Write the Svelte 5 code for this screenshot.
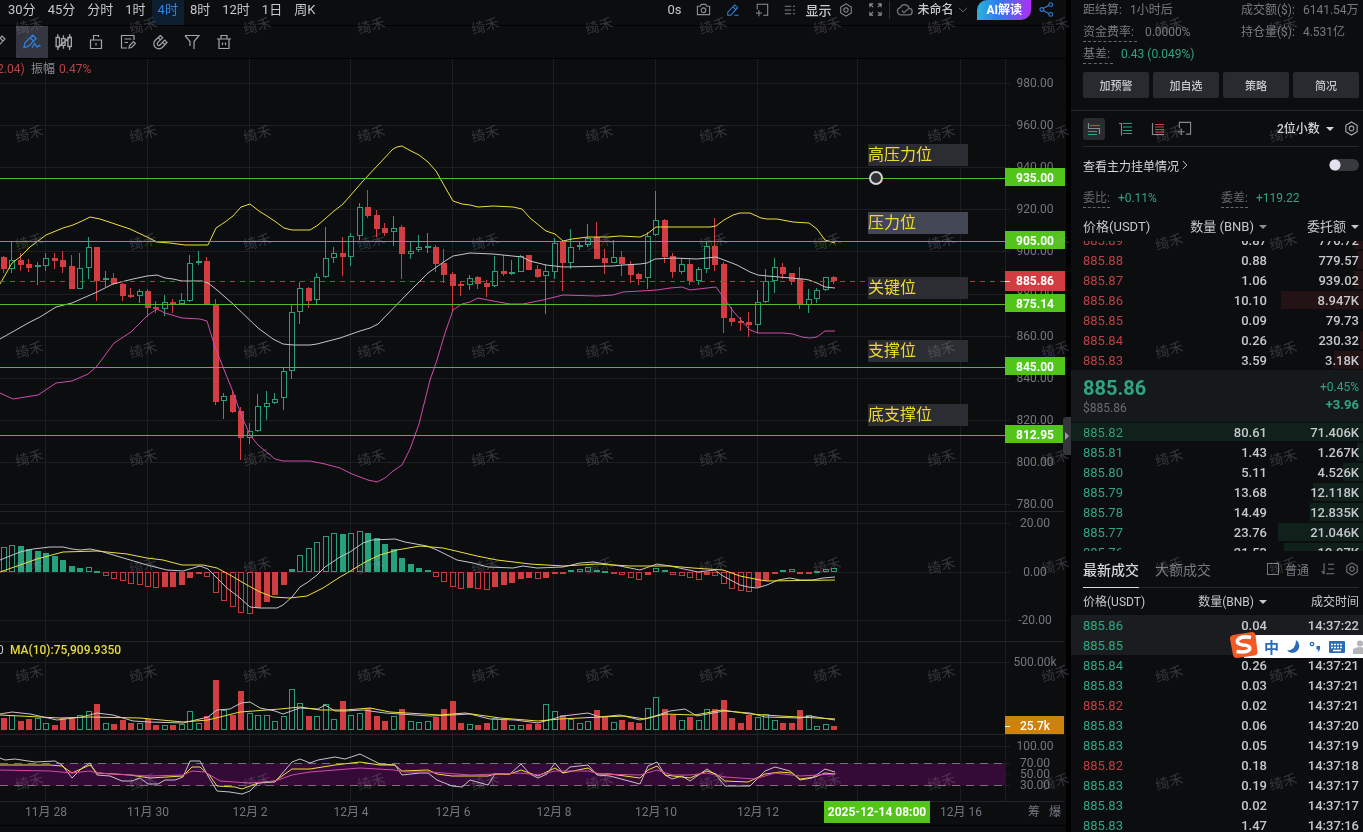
<script lang="ts">
  type Level = { y: number; price: string; label: string; labelY: number; active?: boolean };
  type Row = { price: string; qty: string; total: string; depth: number };

  const periods = ['30分', '45分', '分时', '1时', '4时', '8时', '12时', '1日', '周K'];
  let period = $state('4时');

  const drawTools = [
    { icon: 'pencil', label: '画笔' },
    { icon: 'brush', label: '自由画线' },
    { icon: 'candles', label: 'K线' },
    { icon: 'lock', label: '锁定' },
    { icon: 'note', label: '备注' },
    { icon: 'magnet', label: '磁吸' },
    { icon: 'filter', label: '筛选' },
    { icon: 'trash', label: '删除' }
  ];
  let tool = $state('brush');

  // stroke paths on a 16px grid
  const icons: Record<string, string> = {
    camera: 'M1.500 4.500h3l1.200-2h4.600l1.200 2h3v9h-13zM8 6.300a2.500 2.500 0 1 0 0 5a2.500 2.500 0 0 0 0-5z',
    pencilLine: 'M2 14v-3.500l8-8.300 3.300 3.200-8 8.600zM8 4.300l3.200 3.200M9.500 14h5',
    frameAdd: 'M2.500 7.500V1.500h12V14H9.500M1 11.500h7M4.500 8v7',
    list: 'M1 3h8.500M1 8h8.500M1 13h8.500M12 3h2.500M12 8h2.500M12 13h2.500',
    hex: 'M8 1l6 3.500v7L8 15l-6-3.500v-7zM8 5.500a2.500 2.500 0 1 0 0 5a2.500 2.500 0 0 0 0-5z',
    expand: 'M2 5.500V2h3.500M10.500 2H14v3.500M14 10.500V14h-3.500M5.500 14H2v-3.500M2 2l3.500 3.500M14 2l-3.500 3.500M14 14l-3.500-3.500M2 14l3.500-3.500',
    cloud: 'M4.500 13a3.400 3.400 0 0 1-.5-6.700a4.400 4.400 0 0 1 8.400.7a3 3 0 0 1-.4 6zM5.500 9l2 2 4.500-4',
    chevron: 'M2.500 5l5.500 5.500L13.500 5',
    share: 'M4.500 7l6-3.500M4.500 9l6 3.500M3 6a2 2 0 1 0 0 4a2 2 0 0 0 0-4zM12.500.8a2 2 0 1 0 0 4a2 2 0 0 0 0-4zM12.500 11.200a2 2 0 1 0 0 4a2 2 0 0 0 0-4z',
    pencil: 'M2 13l1-4 7-7 3 3-7 7zM8 4l3 3',
    brush: 'M.8 13l1-4.300L8.500 2l3.200 3-6.700 6.700zM6.500 4.300l3 3M8 13l2.500-3.500 2 3 2-1.500 1 1',
    candles: 'M1 4h3v8H1zM2.500 1v3M2.500 12v3M6 5h3v6H6zM7.500 2v3M7.500 11v3M11.500 4h3v8h-3zM13 1v3M13 12v3M2.500 13L14 3',
    lock: 'M2.500 6h11v8.500h-11zM5.500 6V1.500h5V3M8 9v2.500',
    note: 'M14 6V1.500H1.500v12.500H7M4.500 5h7M4.500 8.500H8M9 14l.5-2.500 4-4 2 2-4 4z',
    magnet: 'M8.500 1.500l-5 4.500a4.800 4.800 0 0 0 6.800 7.500l4.700-5-2.300-2.300-4.700 4.800a1.600 1.600 0 0 1-2.300-2.300l5-4.900zM6.300 3.500l2.200 2.300M10.600 8.300l2.200 2.300',
    filter: 'M1 1.500h14l-5 6v7.500M1 1.500l5 6v4.500',
    trash: 'M1 5h14M3 5v9.500h10V5M5 5V1.500h6V5M6.500 8.500v2.500M9.500 8.500v2.500',
    sort: 'M3.500 1.500v12M3.500 13.500L1 10.500M8 2.500h7M8 8h7M6 13.500h9'
  };

  const step = 8.47;
  const x = (i: number) => Math.round(4 + i * step);

  // up, high, body top, body bottom, low
  const candles = [
    [0, 256, 257, 269, 273], [1, 241, 260, 269, 273], [0, 253, 260, 265, 271], [0, 259, 264, 268, 272], [1, 262, 265, 267, 285],
    [1, 253, 258, 266, 271], [0, 253, 258, 261, 269], [0, 251, 260, 267, 273], [0, 255, 266, 289, 289], [1, 253, 268, 289, 289],
    [1, 237, 247, 268, 279], [0, 247, 247, 281, 301], [1, 271, 278, 280, 287], [0, 273, 278, 284, 285], [0, 283, 284, 296, 301],
    [0, 288, 295, 297, 298], [1, 289, 291, 296, 303], [0, 289, 291, 308, 317], [0, 301, 307, 309, 313], [1, 295, 302, 309, 316],
    [0, 299, 302, 304, 313], [1, 293, 300, 304, 304], [1, 255, 263, 301, 302], [1, 251, 261, 263, 265], [0, 257, 261, 304, 305],
    [0, 299, 304, 402, 405], [1, 393, 396, 401, 419], [0, 391, 395, 412, 413], [0, 407, 411, 438, 460], [1, 423, 431, 438, 444],
    [1, 394, 406, 431, 432], [1, 391, 403, 407, 420], [1, 393, 399, 403, 404], [1, 367, 371, 398, 410], [1, 305, 312, 371, 379],
    [1, 282, 288, 312, 324], [0, 287, 288, 301, 308], [1, 273, 277, 300, 305], [1, 227, 258, 277, 278], [1, 247, 253, 258, 263],
    [0, 237, 253, 257, 276], [1, 233, 236, 257, 266], [1, 203, 207, 236, 240], [0, 190, 207, 216, 218], [0, 210, 215, 229, 237],
    [0, 223, 228, 233, 236], [1, 216, 228, 232, 246], [0, 225, 227, 254, 279], [1, 241, 251, 254, 259], [1, 235, 247, 250, 252],
    [1, 233, 246, 248, 253], [0, 245, 247, 264, 272], [0, 249, 263, 275, 283], [0, 272, 274, 286, 312], [0, 282, 284, 286, 296],
    [1, 275, 278, 285, 290], [0, 276, 277, 284, 289], [0, 280, 283, 287, 297], [1, 256, 271, 286, 287], [0, 255, 271, 274, 276],
    [1, 260, 272, 274, 275], [1, 255, 256, 272, 272], [0, 255, 255, 270, 270], [0, 265, 269, 277, 278], [1, 264, 271, 276, 314],
    [1, 238, 243, 272, 279], [0, 240, 242, 263, 291], [1, 229, 247, 263, 269], [1, 241, 245, 247, 250], [1, 224, 238, 245, 247],
    [0, 222, 237, 259, 259], [0, 249, 258, 263, 274], [1, 240, 257, 263, 263], [0, 251, 257, 264, 276], [0, 261, 264, 275, 283],
    [0, 273, 274, 279, 285], [1, 232, 236, 278, 289], [1, 191, 220, 235, 236], [0, 219, 220, 257, 263], [0, 253, 256, 272, 278],
    [1, 259, 264, 272, 274], [0, 259, 264, 281, 285], [1, 267, 269, 281, 285], [1, 241, 246, 269, 273], [0, 218, 246, 265, 271],
    [0, 262, 264, 318, 333], [0, 307, 318, 322, 326], [0, 317, 321, 323, 331], [0, 312, 322, 325, 337], [1, 290, 302, 325, 333],
    [1, 269, 281, 302, 303], [1, 258, 267, 281, 293], [0, 263, 267, 274, 279], [0, 273, 273, 281, 285], [0, 267, 279, 305, 309],
    [1, 289, 299, 305, 313], [1, 288, 290, 299, 303], [1, 277, 277, 290, 291], [0, 276, 277, 281, 284]
  ];

  const volumes = [
    12, 15, 9, 11, 12, 7, 5, 12, 12, 15, 19, 26, 7, 6, 10, 7, 7, 11, 5, 5, 5, 6, 19, 7, 14, 50, 20, 15, 39, 17, 15, 15, 9,
    14, 41, 27, 14, 14, 26, 11, 29, 15, 17, 22, 14, 9, 14, 21, 9, 8, 9, 13, 21, 29, 7, 6, 5, 7, 12, 10, 5, 5, 6, 6, 26, 19,
    15, 11, 7, 9, 20, 13, 8, 10, 8, 7, 22, 33, 21, 15, 10, 13, 10, 21, 21, 30, 12, 7, 15, 13, 16, 10, 7, 7, 20, 15, 4, 6, 4
  ];

  const macd = [
    25, 27, 26, 23, 21, 19, 16, 12, 6, 4, 5, 1, -4, -7, -9, -12, -13, -15, -16, -15, -15, -13, -6, -1, -5, -21, -29, -35,
    -41, -42, -36, -30, -23, -13, 3, 17, 24, 30, 36, 39, 38, 39, 41, 39, 34, 28, 23, 14, 8, 4, 2, -5, -10, -15, -17, -16,
    -17, -18, -15, -13, -11, -7, -6, -7, -6, -2, -2, 2, 3, 5, 2, 1, -2, -3, -6, -8, -3, 4, 2, -3, -4, -6, -8, -3, -4, -12,
    -17, -19, -20, -15, -9, -2, 2, 3, -1, -1, 1, 3, 4
  ];

  // hollow while the momentum is growing, solid while it fades
  const isHollow = (i: number) => i === 0 || Math.abs(macd[i]) > Math.abs(macd[i - 1]);

  const lines = [
    { tone: 'yellow', d: '0,284 12,263 20,257 30,247 46,235 63,228 73,225 82,221 90,217 100,219 115,224 130,229 147,237 157,242 170,243 185,245 208,245 216,228 225,222 233,216 241,207 250,204 259,211 267,216 276,222 284,228 292,230 310,230 318,225 326,218 334,211 343,204 363,181 393,149 397,147 402,146 411,151 419,155 428,162 436,171 445,187 453,201 462,204 470,205 478,207 493,206 513,207 522,209 530,218 546,231 555,234 563,241 572,239 588,237 607,237 620,236 640,237 647,234 656,227 710,227 716,226 724,220 733,215 740,213 750,213 761,218 767,219 777,219 793,222 809,223 817,229 825,240 835,243' },
    { tone: 'white', d: '0,339 30,322 40,317 56,307 72,303 97,292 113,284 133,279 147,276 157,275 165,278 173,279 182,281 202,281 208,283 217,290 233,304 258,328 273,339 283,344 293,345 310,345 317,344 340,338 360,331 370,328 378,324 411,290 428,273 445,261 453,256 470,253 493,254 522,257 530,261 546,265 563,267 613,266 623,265 640,264 647,263 655,259 673,258 697,259 716,257 724,260 737,265 750,272 758,275 767,276 803,279 809,280 817,283 825,287 835,288' },
    { tone: 'pink', d: '0,393 13,399 38,395 56,383 72,381 88,374 97,366 114,343 131,332 148,315 157,309 165,313 182,318 200,319 207,321 215,347 233,392 242,417 250,435 258,445 275,459 283,461 310,461 325,464 340,468 352,474 368,480 377,482 385,478 393,471 402,465 410,449 419,424 430,380 437,360 445,333 453,310 462,304 470,302 478,298 493,301 510,304 523,304 543,300 555,297 563,295 597,296 613,295 623,292 640,291 657,290 670,288 682,287 690,290 707,288 716,287 724,298 733,311 741,320 750,330 758,333 783,333 793,334 802,337 810,338 817,337 825,331 835,331' },
    { tone: 'white', d: '0,560 20,552 33,549 50,547 63,547 72,549 80,550 90,549 100,551 120,557 147,565 167,570 183,571 200,566 208,569 217,578 227,588 240,598 250,607 260,608 277,608 283,605 292,597 300,587 308,582 317,575 325,567 340,557 350,552 363,543 372,540 395,539 405,542 427,546 437,550 457,560 473,563 488,567 513,568 523,566 537,568 563,567 580,563 593,562 620,566 640,570 657,564 670,566 698,572 715,570 723,576 740,585 748,587 757,588 767,585 778,580 790,578 800,580 813,580 823,578 835,577' },
    { tone: 'yellow', d: '0,572 20,565 37,559 63,552 97,551 127,554 147,558 163,560 182,565 203,565 217,568 230,575 247,585 260,592 273,597 290,598 307,596 323,588 340,577 347,573 367,561 380,555 397,550 420,546 443,548 477,556 497,560 530,564 563,566 597,564 630,566 670,566 693,568 723,570 740,576 760,580 767,581 835,580' },
    { tone: 'white', d: '0,714 12,712 30,714 57,720 82,717 97,713 113,715 133,721 150,722 183,723 208,717 217,710 230,709 241,703 250,702 260,708 275,711 283,714 300,708 318,709 325,705 335,711 345,711 363,710 385,713 430,716 452,715 470,714 490,719 515,720 538,723 563,716 588,713 600,717 620,715 640,720 655,716 670,711 685,709 697,716 724,711 750,713 765,717 800,718 810,716 835,720' },
    { tone: 'yellow', d: '0,715 60,718 90,717 140,718 183,722 208,720 240,712 280,709 300,707 320,710 345,710 370,708 390,712 440,715 465,713 500,718 538,721 560,719 600,717 625,716 645,719 665,714 695,715 722,710 750,714 780,716 835,719' },
    { tone: 'white', d: '0,758 5,760 15,759 35,762 55,761 62,765 72,778 82,768 90,763 97,775 110,776 122,781 132,781 140,778 148,784 158,784 165,780 175,780 183,777 190,761 200,761 208,776 217,791 230,792 242,794 250,791 258,783 275,782 292,762 300,759 310,763 318,760 335,757 345,759 360,754 380,764 395,765 402,775 420,773 428,773 437,780 452,786 462,787 470,780 488,785 495,774 510,774 521,764 530,774 538,778 547,774 555,763 563,773 570,767 588,765 597,775 610,776 640,784 648,766 657,762 665,775 672,779 682,776 690,781 707,769 716,775 725,786 750,786 765,771 775,767 790,771 800,780 812,778 825,769 835,772' },
    { tone: 'yellow', d: '0,765 50,765 62,766 72,773 90,765 97,773 130,775 150,778 183,776 192,767 200,767 210,776 217,786 235,787 242,789 258,783 275,781 292,769 310,769 335,765 360,762 380,765 395,765 402,771 428,770 437,774 452,776 488,776 495,774 510,774 521,770 538,776 555,768 563,773 588,768 597,774 610,774 640,778 648,770 657,766 665,775 690,778 707,771 716,774 725,781 748,782 765,774 780,772 792,773 800,779 815,777 825,773 835,774' },
    { tone: 'pink', d: '0,770 50,771 72,773 90,771 97,773 150,776 183,775 192,771 205,772 220,781 250,783 275,781 292,775 310,772 335,770 360,768 395,770 405,772 430,772 470,775 521,773 538,775 555,771 588,771 600,774 640,775 657,770 672,775 690,775 707,773 725,777 755,779 775,773 800,776 835,774' }
  ];

  const axis = [
    { y: 83, text: '980.00' }, { y: 125, text: '960.00' }, { y: 167, text: '940.00' }, { y: 209, text: '920.00' },
    { y: 251, text: '900.00' }, { y: 294, text: '880.00' }, { y: 336, text: '860.00' }, { y: 378, text: '840.00' },
    { y: 420, text: '820.00' }, { y: 462, text: '800.00' }, { y: 504, text: '780.00' }, { y: 523, text: '20.00' },
    { y: 572, text: '0.00' }, { y: 620, text: '-20.00' }, { y: 662, text: '500.00k' }, { y: 746, text: '100.00' },
    { y: 763, text: '70.00' }, { y: 774, text: '50.00' }, { y: 785, text: '30.00' }
  ];

  const dates = [
    { x: 46, text: '11月 28' }, { x: 148, text: '11月 30' }, { x: 250, text: '12月 2' }, { x: 351, text: '12月 4' },
    { x: 453, text: '12月 6' }, { x: 554, text: '12月 8' }, { x: 656, text: '12月 10' }, { x: 758, text: '12月 12' },
    { x: 858, text: '' }, { x: 961, text: '12月 16' }
  ];

  const levels: Level[] = [
    { y: 178, price: '935.00', label: '高压力位', labelY: 144 },
    { y: 241, price: '905.00', label: '压力位', labelY: 212, active: true },
    { y: 304, price: '875.14', label: '关键位', labelY: 277 },
    { y: 367, price: '845.00', label: '支撑位', labelY: 340 },
    { y: 435, price: '812.95', label: '底支撑位', labelY: 404 }
  ];

  // depth is the bar width in percent of the panel
  const asks: Row[] = [
    { price: '885.89', qty: '0.87', total: '770.72', depth: 3 },
    { price: '885.88', qty: '0.88', total: '779.57', depth: 2 },
    { price: '885.87', qty: '1.06', total: '939.02', depth: 3 },
    { price: '885.86', qty: '10.10', total: '8.947K', depth: 28 },
    { price: '885.85', qty: '0.09', total: '79.73', depth: 0 },
    { price: '885.84', qty: '0.26', total: '230.32', depth: 1 },
    { price: '885.83', qty: '3.59', total: '3.18K', depth: 10 }
  ];
  const bids: Row[] = [
    { price: '885.82', qty: '80.61', total: '71.406K', depth: 100 },
    { price: '885.81', qty: '1.43', total: '1.267K', depth: 2 },
    { price: '885.80', qty: '5.11', total: '4.526K', depth: 7 },
    { price: '885.79', qty: '13.68', total: '12.118K', depth: 17 },
    { price: '885.78', qty: '14.49', total: '12.835K', depth: 18 },
    { price: '885.77', qty: '23.76', total: '21.046K', depth: 29 },
    { price: '885.76', qty: '21.53', total: '19.07K', depth: 27 }
  ];

  const trades = [
    { price: '885.86', qty: '0.04', time: '14:37:22', up: true, fresh: true },
    { price: '885.85', qty: '', time: '', up: true, fresh: true },
    { price: '885.84', qty: '0.26', time: '14:37:21', up: true },
    { price: '885.83', qty: '0.03', time: '14:37:21', up: true },
    { price: '885.82', qty: '0.02', time: '14:37:21', up: false },
    { price: '885.83', qty: '0.06', time: '14:37:20', up: true },
    { price: '885.83', qty: '0.05', time: '14:37:19', up: true },
    { price: '885.82', qty: '0.18', time: '14:37:18', up: false },
    { price: '885.83', qty: '0.19', time: '14:37:17', up: true },
    { price: '885.83', qty: '0.02', time: '14:37:17', up: true },
    { price: '885.83', qty: '1.47', time: '14:37:16', up: true }
  ];

  let showMain = $state(false);
  let plain = $state(false);
</script>

{#snippet icon(name: string, size = 14)}
  <svg class="icon" width={size} height={size} viewBox="0 0 16 16"><path d={icons[name]} /></svg>
{/snippet}

{#snippet depthRows(rows: Row[], side: string)}
  <tbody class="depth {side}">
    {#each rows as row}
      <tr>
        <td class="price">
          <span class="bar" style="width: {row.depth}%"></span>
          {row.price}
        </td>
        <td>{row.qty}</td>
        <td>{row.total}</td>
      </tr>
    {/each}
  </tbody>
{/snippet}

<div class="app">
  <main>
    <nav class="topbar">
      <div class="periods">
        {#each periods as p}
          <button class:active={p === period} onclick={() => (period = p)}>{p}</button>
        {/each}
      </div>
      <div class="tools">
        <span>0s</span>
        <button aria-label="截图">{@render icon('camera', 15)}</button>
        <button class="blue" aria-label="画线">{@render icon('pencilLine')}</button>
        <button aria-label="新增">{@render icon('frameAdd')}</button>
        <button aria-label="列表">{@render icon('list', 12)}</button>
      </div>
      <div class="display">
        <button class="strong">显示</button>
        <button aria-label="设置">{@render icon('hex')}</button>
      </div>
      <button class="full" aria-label="全屏">{@render icon('expand', 15)}</button>
      <button class="layout">{@render icon('cloud', 17)}未命名{@render icon('chevron', 12)}</button>
      <button class="ai">AI解读</button>
      <button class="blue share" aria-label="分享">{@render icon('share', 15)}</button>
    </nav>

    <div class="drawbar">
      {#each drawTools as t}
        <button class:active={t.icon === tool} aria-label={t.label} onclick={() => (tool = t.icon)}>
          {@render icon(t.icon, t.icon === 'brush' || t.icon === 'candles' ? 18 : 16)}
        </button>
      {/each}
    </div>

    <svg class="chart" viewBox="0 59 1066 766">
      <g class="grid">
        {#each axis as a}
          <line x1="0" x2="1010" y1={a.y + 0.5} y2={a.y + 0.5} />
        {/each}
        {#each dates as d}
          <line x1={d.x - 0.5} x2={d.x - 0.5} y1="59" y2="801" />
        {/each}
        <line x1="1005.5" x2="1005.5" y1="59" y2="801" />
        {#each [511, 641, 734, 801] as y}
          <line class="split" x1="0" x2="1064" y1={y + 0.5} y2={y + 0.5} />
        {/each}
      </g>

      <rect class="band" x="0" y="764" width="1005" height="22" />
      <line class="band-edge" x1="0" x2="1005" y1="763.5" y2="763.5" />
      <line class="band-edge" x1="0" x2="1005" y1="785.5" y2="785.5" />

      {#each candles as [up, high, top, bottom, low], i}
        <g class={up ? 'up' : 'down'}>
          <line x1={x(i) - 0.5} x2={x(i) - 0.5} y1={high} y2={top} />
          <line x1={x(i) - 0.5} x2={x(i) - 0.5} y1={bottom} y2={low} />
          <rect x={x(i) - 2.5} y={top + 0.5} width="5" height={Math.max(bottom - top - 1, 1)} />
        </g>
        <rect
          class={up ? 'hollow-up' : 'solid-down'}
          x={x(i) - 2.5}
          y={730.5 - volumes[i]}
          width="5"
          height={volumes[i] - 1}
        />
        <rect
          class="{isHollow(i) ? 'hollow' : 'solid'}-{macd[i] > 0 ? 'up' : 'down'}"
          x={x(i) - 2.5}
          y={macd[i] > 0 ? 572.5 - macd[i] : 572.5}
          width="5"
          height={Math.max(Math.abs(macd[i]) - 1, 1)}
        />
      {/each}

      {#each lines as l}
        <polyline class={l.tone} points={l.d} />
      {/each}

      <g class="axis">
        {#each axis as a}
          <text x="1035" y={a.y + 4}>{a.text}</text>
        {/each}
        {#each dates as d}
          <text x={d.x} y="816">{d.text}</text>
        {/each}
        <text x="1034" y="816">筹</text>
        <text x="1055" y="816">爆</text>
      </g>

      <line class="last" x1="0" x2="1005" y1="281.5" y2="281.5" />
      {#each levels as l}
        <rect class="note" class:active={l.active} x="868" y={l.labelY} width="100" height="22" />
        <text class="note-text" x="868" y={l.labelY + 16}>{l.label}</text>
        <line class="level" x1="0" x2="1005" y1={l.y + 0.5} y2={l.y + 0.5} />
        <rect class="tag" x="1005" y={l.y - 10} width="60" height="18" />
        <text class="tag-text" x="1035" y={l.y + 4}>{l.price}</text>
      {/each}
      <circle class="anchor" cx="876" cy="178" r="6" />
      <rect class="tag last-tag" x="1005" y="271" width="60" height="20" />
      <line class="tick" x1="1005" x2="1010" y1="281.5" y2="281.5" />
      <text class="tag-text" x="1035" y="285">885.86</text>
      <rect class="tag volume-tag" x="1005" y="716" width="59" height="18" />
      <line class="tick" x1="1005" x2="1010" y1="726.5" y2="726.5" />
      <text class="tag-text medium" x="1035" y="730">25.7k</text>
      <rect class="tag" x="824" y="801" width="106" height="22" />
      <text class="tag-text" x="877" y="816">2025-12-14 08:00</text>

      <text class="legend red" x="-3" y="73">2.04)</text>
      <text class="legend" x="31" y="73">振幅</text>
      <text class="legend red" x="59" y="73">0.47%</text>
      <text class="legend light" x="-3" y="654">0</text>
      <text class="legend ma" x="10" y="654">MA(10):75,909.9350</text>
    </svg>
    <button class="collapse" aria-label="收起"></button>
  </main>

  <aside>
    <section class="stats">
      <div><span>距结算:</span> <b>1小时后</b></div>
      <div><span>成交额($):</span> <b>6141.54万</b></div>
      <div><span class="hint">资金费率:</span> <b>0.0000%</b></div>
      <div><span>持仓量($):</span> <b>4.531亿</b></div>
      <div><span class="hint">基差:</span> <b class="green">0.43 (0.049%)</b></div>
    </section>
    <div class="actions">
      <button>加预警</button>
      <button>加自选</button>
      <button>策略</button>
      <button>简况</button>
    </div>

    <div class="bookbar">
      <button class="active" aria-label="买卖盘">
        <svg class="icon" width="14" height="14" viewBox="0 0 14 14">
          <path d="M1.500 1v5.500H12.500V12" /><path class="r" d="M3 3.500h10" /><path class="g" d="M1 9.500h9M1 12.500h9" />
        </svg>
      </button>
      <button aria-label="买盘">
        <svg class="icon" width="14" height="14" viewBox="0 0 14 14">
          <path d="M0 1.500h2.500v12" /><path class="g" d="M4 1.500h9M4 5h9M4 8.500h9M4 11.500h9" />
        </svg>
      </button>
      <button aria-label="卖盘">
        <svg class="icon" width="14" height="14" viewBox="0 0 14 14">
          <path d="M1.500 1v11.500H13" /><path class="r" d="M4 2.500h9M4 5h9M4 7.500h9M4 10h9" />
        </svg>
      </button>
      <button class="add" aria-label="添加">{@render icon('frameAdd', 15)}</button>
      <span class="select">
        <select aria-label="小数位"><option>2位小数</option><option>1位小数</option></select>
        <i class="caret"></i>
      </span>
      <button class="gear" aria-label="盘口设置">{@render icon('hex', 15)}</button>
    </div>

    <div class="main-orders">
      <a href="#orders">查看主力挂单情况{@render icon('chevron', 12)}</a>
      <input type="checkbox" class="switch" aria-label="主力挂单" bind:checked={showMain} />
    </div>

    <div class="ratio">
      <div><span class="hint">委比:</span> <b>+0.11%</b></div>
      <div><span class="hint">委差:</span> <b>+119.22</b></div>
    </div>

    <table class="book">
      <thead>
        <tr>
          <th>价格(USDT)</th>
          <th>数量 (BNB)<i class="caret dim"></i></th>
          <th>委托额<i class="caret"></i></th>
        </tr>
      </thead>
      {@render depthRows(asks, 'asks')}
      <tbody>
        <tr class="mid">
          <td><strong>885.86</strong><small>$885.86</small></td>
          <td></td>
          <td>+0.45%<b>+3.96</b></td>
        </tr>
      </tbody>
      {@render depthRows(bids, 'bids')}
    </table>

    <div class="tabs">
      <button class="active">最新成交</button>
      <button>大额成交</button>
      <label><input type="checkbox" bind:checked={plain} />普通</label>
      <button class="sort" aria-label="排序">{@render icon('sort')}</button>
      <button aria-label="成交设置">{@render icon('hex')}</button>
    </div>

    <table class="trades">
      <thead>
        <tr>
          <th>价格(USDT)</th>
          <th>数量(BNB)<i class="caret"></i></th>
          <th>成交时间</th>
        </tr>
      </thead>
      <tbody>
        {#each trades as t}
          <tr class:fresh={t.fresh}>
            <td class={t.up ? 'green' : 'red'}>{t.price}</td>
            <td>{t.qty}</td>
            <td>{t.time}</td>
          </tr>
        {/each}
      </tbody>
    </table>
  </aside>

  <div class="watermark" aria-hidden="true">
    {#each { length: 96 } as _}
      <span>绮禾</span>
    {/each}
  </div>

  <div class="ime">
    <svg class="logo" width="30" height="28" viewBox="0 0 30 28">
      <path d="M4 4L23 1q3 0 3.500 3l2 17q0 3-3 3.500L8 27q-3 .500-4-3L1 8q-.500-3 3-4z" fill="#f15a24" />
      <path d="M22 6.500Q13 4.500 9 8.500q-2.500 4.500 5 5.500 8 .500 6.500 4.500Q18 22 7.500 20.500" fill="none" stroke="#fff" stroke-width="3.600" />
    </svg>
    <span>中</span>
    <svg width="14" height="14" viewBox="0 0 14 14"><path d="M9 0a7 7 0 1 1-9 10.500Q9 10 9 0z" fill="#2b6cb8" /></svg>
    <svg width="12" height="12" viewBox="0 0 12 12">
      <circle cx="3" cy="3" r="1.700" fill="none" stroke="#2b6cb8" stroke-width="1.300" />
      <path d="M7.500 5h3.500v2.500q0 2.500-3 3.500 1.300-1 1.300-2.500H7.500z" fill="#2b6cb8" />
    </svg>
    <svg width="16" height="12" viewBox="0 0 16 12">
      <rect width="16" height="12" rx="1" fill="#2b6cb8" />
      <path d="M2 3.500h12M2 6.500h12" stroke="#fff" stroke-width="1.500" stroke-dasharray="2 1" /><path d="M4 9.500h8" stroke="#fff" stroke-width="1.500" />
    </svg>
    <svg width="14" height="14" viewBox="0 0 14 14">
      <circle cx="7" cy="3.500" r="3" fill="#b4b4b8" /><path d="M0 9q7-4 14 0v5H0z" fill="#b4b4b8" />
    </svg>
  </div>
</div>

<style>
  :global(body) {
    margin: 0;
    background: #000;
  }

  .app {
    position: relative;
    display: grid;
    grid-template-columns: minmax(0, 1fr) 292px;
    gap: 5px;
    height: 100vh;
    overflow: hidden;
    color: #c6c8cd;
    font-family: Roboto, "Noto Sans CJK SC", sans-serif;
    font-size: 12px;
  }

  main,
  aside {
    position: relative;
    min-width: 0;
    background: #0c0d0f;
  }

  button,
  select {
    padding: 0;
    border: 0;
    background: none;
    color: inherit;
    font: inherit;
    white-space: nowrap;
    cursor: pointer;
  }

  .icon {
    display: block;
    flex: none;
    fill: none;
    stroke: currentColor;
    stroke-width: 1.2;
  }
  .icon .r { stroke: #cf3f42; }
  .icon .g { stroke: #2fa37a; }

  .green { color: #2ea57f; }
  .red { color: #bd4144; }
  .blue { color: #2f80dd; }

  /* top bar */
  .topbar {
    display: flex;
    align-items: center;
    height: 19px;
    padding: 0 12px 6px 2px;
    border-bottom: 1px solid #000;
    font-size: 13px;
  }
  .periods {
    display: flex;
    margin-right: auto;
  }
  .periods button {
    height: 19px;
    padding: 0 6px;
    line-height: 19px;
  }
  .periods .active {
    background: #0e1e31;
    box-shadow: 0 6px #0e1e31;
    color: #2f86e6;
  }
  .tools {
    display: flex;
    align-items: center;
    gap: 15px;
    margin-right: 9px;
    color: #8b8e94;
  }
  .tools span { color: #c6c8cd; }
  .tools .blue { color: #2f80dd; }
  .display {
    display: flex;
    align-items: center;
    gap: 8px;
    margin-right: 15px;
  }
  .display button:last-child,
  .full {
    color: #8b8e94;
  }
  .strong { font-weight: 500; }
  .layout {
    display: flex;
    align-items: center;
    gap: 4px;
    margin-left: 6px;
    padding-left: 6px;
    border-left: 1px solid #2b2d31;
    font-size: 12px;
    font-weight: 500;
    line-height: 18px;
  }
  .layout .icon { color: #6f7278; }
  .ai {
    align-self: flex-start;
    height: 20px;
    margin: 0 8px;
    padding: 0 9px;
    border-radius: 10px 0 10px 0;
    background: linear-gradient(90deg, #2bb3d8, #2f7bf0 40%, #b02df5);
    color: #fff;
    font-size: 12px;
    font-weight: 700;
    line-height: 20px;
  }

  .drawbar {
    display: flex;
    height: 32px;
    margin-left: -16px;
    border-bottom: 1px solid #000;
    color: #a3a5aa;
  }
  .drawbar button {
    display: grid;
    place-items: center;
    width: 32px;
  }
  .drawbar .active {
    background: #343741;
    color: #2f80dd;
  }

  /* chart */
  .chart {
    display: block;
    width: 100%;
    border-bottom: 1px solid #000;
    font-family: Roboto, "Noto Sans CJK SC", sans-serif;
    font-size: 12px;
  }
  .grid line { stroke: #1c1e21; }
  .grid .split { stroke: #222428; }
  .axis text {
    fill: #73777f;
    text-anchor: middle;
  }
  .up line,
  .up rect,
  .hollow-up {
    fill: #0c0d0f;
    stroke: #2a9d78;
  }
  .up rect, .hollow-up, .hollow-down { fill-opacity: 0.5; }
  .hollow-down {
    fill: #0c0d0f;
    stroke: #c23c3f;
  }
  .down line,
  .down rect,
  .solid-down {
    fill: #d13d40;
    stroke: #d13d40;
  }
  .solid-up {
    fill: #27a17c;
    stroke: #27a17c;
  }
  polyline { fill: none; }
  .yellow { stroke: #ece03c; }
  .white { stroke: #c4c4cc; }
  .pink { stroke: #d14bab; }
  .band { fill: #340a36; }
  .band-edge {
    stroke: #77707a;
    stroke-dasharray: 8 6;
  }
  .last {
    stroke: #b53a3d;
    stroke-dasharray: 5 5;
  }
  .level { stroke: #55b82c; }
  .note { fill: #2c2d32; }
  .note.active { fill: #434653; }
  .note-text {
    fill: #f0da2e;
    font-size: 16px;
  }
  .tag { fill: #52c41a; }
  .last-tag { fill: #d13d40; }
  .volume-tag { fill: #cc820e; }
  .tag-text {
    fill: #fff;
    font-weight: 700;
    text-anchor: middle;
  }
  .tag-text.medium { font-weight: 500; }
  .tick { stroke: #fff; }
  .anchor {
    fill: #303136;
    stroke: #d4d4d8;
    stroke-width: 2;
  }
  .legend { fill: #8a8d93; }
  .legend.red { fill: #bd4144; }
  .legend.light { fill: #c6c8cd; }
  .legend.ma {
    fill: #e6da3c;
    font-weight: 500;
  }
  .collapse {
    position: absolute;
    top: 417px;
    right: -5px;
    z-index: 1;
    width: 8px;
    height: 38px;
    border-radius: 3px 0 0 3px;
    background: #34363c;
  }
  .collapse::after {
    content: "";
    display: block;
    margin-left: 2px;
    width: 0;
    border: 4px solid transparent;
    border-left-color: #9a9ca2;
    border-right: 0;
  }

  /* right panel */
  .stats {
    display: grid;
    grid-template-columns: 158px auto;
    gap: 4px 0;
    padding: 1px 0 0 12px;
    color: #777a82;
    line-height: 18px;
    white-space: nowrap;
  }
  .stats b {
    margin-left: 5px;
    font-weight: 400;
  }
  .hint {
    padding-bottom: 2px;
    border-bottom: 1px dashed #66696f;
  }
  .stats .hint { padding-right: 3px; }
  .actions {
    display: grid;
    grid-template-columns: repeat(4, 1fr);
    gap: 4px;
    padding: 9px 4px 12px 12px;
    border-bottom: 1px solid #26282c;
  }
  .actions button {
    height: 26px;
    border-radius: 2px;
    background: #292a2f;
    font-size: 11px;
    font-weight: 500;
  }
  .bookbar {
    display: flex;
    align-items: center;
    gap: 10px;
    height: 35px;
    margin: 0 4px 0 12px;
    border-bottom: 1px solid #26282c;
    color: #85888e;
  }
  .bookbar button {
    display: grid;
    place-items: center;
    width: 22px;
    height: 22px;
    border-radius: 3px;
  }
  .bookbar .active { background: #2a2b30; }
  .bookbar .add {
    width: 15px;
    margin-left: -2px;
  }
  .bookbar .gear {
    width: 15px;
    color: #a9abb0;
  }
  .select {
    display: flex;
    align-items: center;
    margin-left: auto;
    color: #d6d7da;
    font-weight: 500;
  }
  select { appearance: none; }
  .caret {
    display: inline-block;
    margin-left: 6px;
    border: 4px solid transparent;
    border-top-color: currentColor;
    border-bottom: 0;
    vertical-align: 2px;
  }
  .caret.dim { color: #8b8e94; }
  th .caret { margin-left: 5px; }
  .main-orders {
    display: flex;
    align-items: center;
    justify-content: space-between;
    height: 36px;
    padding: 0 4px 0 12px;
  }
  .main-orders a {
    display: flex;
    align-items: center;
    color: #d6d7da;
    text-decoration: none;
  }
  .main-orders .icon { transform: rotate(-90deg); }
  .switch {
    appearance: none;
    width: 30px;
    height: 12px;
    margin: 0;
    border-radius: 6px;
    background: radial-gradient(circle at 6px 6px, #e2e0ea 5px, transparent 6px) #38393e;
  }
  .ratio {
    display: grid;
    grid-template-columns: 1fr 1fr;
    align-items: center;
    height: 27px;
    padding: 0 4px 0 12px;
    color: #66696f;
  }
  .ratio b {
    margin-left: 5px;
    color: #2ea57f;
    font-weight: 400;
  }

  table {
    display: block;
    width: 100%;
  }
  thead,
  tbody {
    display: block;
  }
  tr {
    position: relative;
    display: grid;
    grid-template-columns: repeat(3, 1fr);
    flex: none;
    height: 20px;
    padding: 0 4px 0 12px;
    line-height: 22px;
  }
  th,
  td {
    padding: 0;
    font-size: 13px;
    font-weight: 400;
    text-align: right;
    white-space: nowrap;
  }
  td {
    position: relative;
    font-weight: 500;
  }
  th:first-child,
  td:first-child {
    position: static;
    font-weight: 400;
    text-align: left;
  }
  .book thead tr {
    height: 31px;
    line-height: 34px;
  }
  .book .depth {
    display: flex;
    flex-direction: column;
    height: 129px;
    overflow: hidden;
  }
  .book .asks { justify-content: flex-end; }
  .asks .price { color: #bd4144; }
  .bids .price { color: #2ea57f; }
  .bar {
    position: absolute;
    inset: 1px 0 1px auto;
    background: #231315;
  }
  .bids .bar {
    background: #10211b;
    mix-blend-mode: lighten;
  }
  .mid {
    align-items: center;
    height: 52px;
    background: #16191c;
  }
  .mid strong,
  .mid small,
  .mid b {
    display: block;
  }
  .mid strong {
    color: #2ea57f;
    font-size: 20px;
    line-height: 24px;
  }
  .mid small {
    color: #686b71;
    font-size: 12px;
    line-height: 16px;
  }
  .mid td:last-child {
    color: #2ea57f;
    font-size: 12px;
    font-weight: 400;
    line-height: 18px;
  }
  .mid b { font-size: 13px; }

  .tabs {
    display: flex;
    align-items: center;
    height: 36px;
    margin: 0 4px 0 12px;
    border-bottom: 1px solid #26282c;
    color: #777a82;
  }
  .tabs button:nth-child(-n + 2) {
    height: 36px;
    margin-right: 16px;
    font-size: 14px;
  }
  .tabs .active {
    box-shadow: 0 1px #d6d7da;
    color: #d6d7da;
    font-weight: 500;
  }
  .tabs label {
    display: flex;
    align-items: center;
    gap: 6px;
    margin-left: auto;
  }
  .tabs input {
    appearance: none;
    width: 12px;
    height: 12px;
    margin: 0;
    border: 1px solid #777a82;
  }
  .tabs .sort { margin: 0 10px 0 12px; }
  .trades th { font-size: 12px; }
  .trades thead tr {
    height: 27px;
    line-height: 28px;
  }
  .trades .fresh { background: #1b1c20; }

  .watermark {
    position: absolute;
    inset: -29px 0 0 -28px;
    display: grid;
    grid-template-columns: repeat(12, 114px);
    grid-auto-rows: 108px;
    place-items: center;
    overflow: hidden;
    color: rgba(170, 170, 178, 0.26);
    font-size: 14px;
    pointer-events: none;
  }
  .watermark span { transform: rotate(-15deg); }

  .ime {
    position: absolute;
    top: 635px;
    right: -4px;
    display: flex;
    align-items: center;
    gap: 8px;
    height: 23px;
    background: #fff;
    color: #2b6cb8;
  }
  .ime .logo { margin: -3px -3px 0 -15px; }
  .ime span {
    font-size: 15px;
    font-weight: 700;
  }
</style>
